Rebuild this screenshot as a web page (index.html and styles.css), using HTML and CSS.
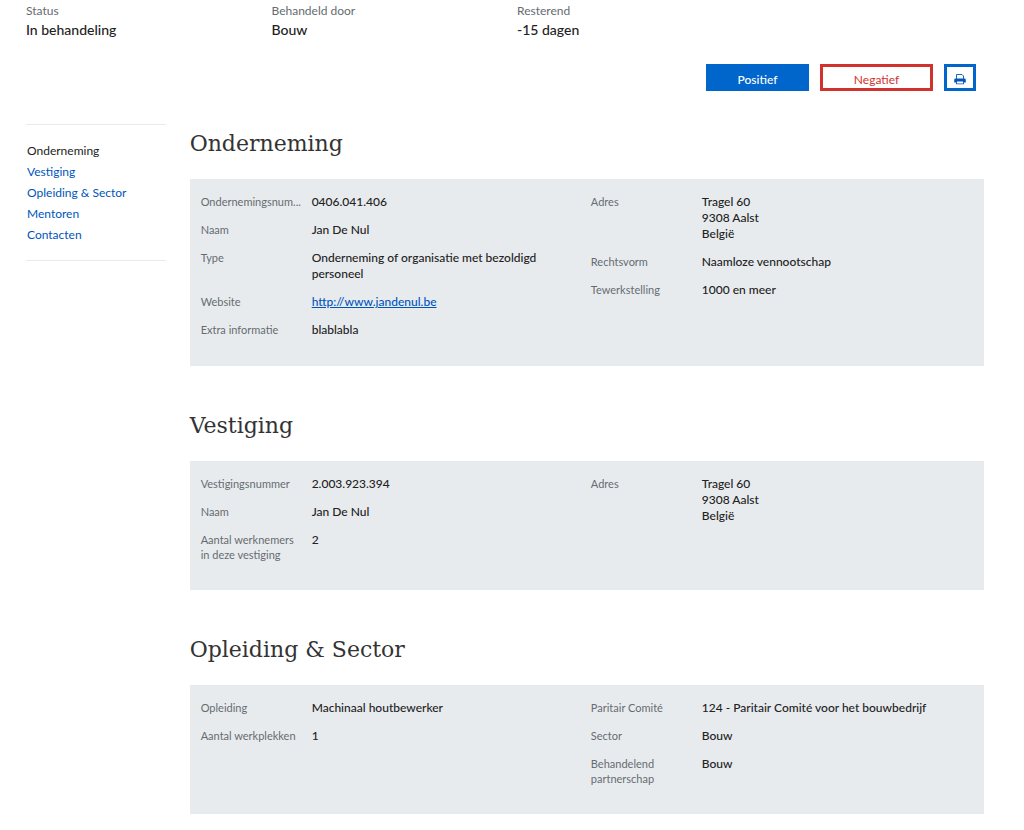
FILE: index.html
```html
<!DOCTYPE html>
<html lang="nl">
<head>
<meta charset="utf-8">
<meta name="viewport" content="width=device-width, initial-scale=1">
<title>Onderneming</title>
<link rel="stylesheet" href="styles.css">
</head>
<body>
<div class="page">
  <dl class="summary">
    <div><dt>Status</dt><dd>In behandeling</dd></div>
    <div><dt>Behandeld door</dt><dd>Bouw</dd></div>
    <div><dt>Resterend</dt><dd>-15 dagen</dd></div>
  </dl>

  <div class="actions">
    <button class="button button-positive" type="button">Positief</button>
    <button class="button button-negative" type="button">Negatief</button>
    <button class="button button-print" type="button" aria-label="Afdrukken">
      <svg class="print-icon" viewBox="0 0 12 12" aria-hidden="true">
        <path d="M2.500 6V1.500h5.500l1.500 1.500V6" fill="none" stroke="currentColor" stroke-width="0.900"/>
        <path fill="currentColor" fill-rule="evenodd" d="M1.600 5.500h8.800Q11.800 5.500 11.800 6.900V9.500H10V11.300H2V9.500H.2V6.900Q.2 5.500 1.600 5.500zM2.900 8.500v2h6.200v-2z"/>
      </svg>
    </button>
  </div>

  <div class="layout">
    <nav class="side-nav" aria-label="Secties">
      <a class="current" href="#onderneming" aria-current="true">Onderneming</a>
      <a href="#vestiging">Vestiging</a>
      <a href="#opleiding">Opleiding &amp; Sector</a>
      <a href="#mentoren">Mentoren</a>
      <a href="#contacten">Contacten</a>
    </nav>

    <main class="content">
      <section class="section" id="onderneming">
        <h2>Onderneming</h2>
        <div class="panel">
          <dl class="fields">
            <div class="field"><dt title="Ondernemingsnummer">Ondernemingsnum...</dt><dd>0406.041.406</dd></div>
            <div class="field"><dt>Naam</dt><dd>Jan De Nul</dd></div>
            <div class="field"><dt>Type</dt><dd>Onderneming of organisatie met bezoldigd personeel</dd></div>
            <div class="field"><dt>Website</dt><dd><a href="http://www.jandenul.be">http://www.jandenul.be</a></dd></div>
            <div class="field"><dt>Extra informatie</dt><dd>blablabla</dd></div>
          </dl>
          <dl class="fields">
            <div class="field"><dt>Adres</dt><dd>Tragel 60<br>9308 Aalst<br>België</dd></div>
            <div class="field"><dt>Rechtsvorm</dt><dd>Naamloze vennootschap</dd></div>
            <div class="field"><dt>Tewerkstelling</dt><dd>1000 en meer</dd></div>
          </dl>
        </div>
      </section>

      <section class="section" id="vestiging">
        <h2>Vestiging</h2>
        <div class="panel">
          <dl class="fields">
            <div class="field"><dt>Vestigingsnummer</dt><dd>2.003.923.394</dd></div>
            <div class="field"><dt>Naam</dt><dd>Jan De Nul</dd></div>
            <div class="field"><dt>Aantal werknemers in deze vestiging</dt><dd>2</dd></div>
          </dl>
          <dl class="fields">
            <div class="field"><dt>Adres</dt><dd>Tragel 60<br>9308 Aalst<br>België</dd></div>
          </dl>
        </div>
      </section>

      <section class="section" id="opleiding">
        <h2>Opleiding &amp; Sector</h2>
        <div class="panel">
          <dl class="fields">
            <div class="field"><dt>Opleiding</dt><dd>Machinaal houtbewerker</dd></div>
            <div class="field"><dt>Aantal werkplekken</dt><dd>1</dd></div>
          </dl>
          <dl class="fields">
            <div class="field"><dt>Paritair Comité</dt><dd>124 - Paritair Comité voor het bouwbedrijf</dd></div>
            <div class="field"><dt>Sector</dt><dd>Bouw</dd></div>
            <div class="field"><dt>Behandelend partnerschap</dt><dd>Bouw</dd></div>
          </dl>
        </div>
      </section>
    </main>
  </div>
</div>
</body>
</html>
```
FILE: styles.css
```css
* { box-sizing: border-box; }

body {
  margin: 0;
  background: #fff;
  color: #222;
  font-family: Lato, "Open Sans", sans-serif;
  font-size: 12px;
}

dl, dd, h2 { margin: 0; }

dt { color: #666b70; }

a { color: #0055bb; }

.page { padding: 3px 40px 16px 26px; }

.summary {
  display: grid;
  grid-template-columns: repeat(4, 1fr);
  gap: 24px;
}

.summary dt { line-height: 16px; }

.summary dd {
  font-size: 14px;
  font-weight: 500;
  line-height: 22px;
}

.actions {
  display: flex;
  justify-content: flex-end;
  gap: 11px;
  padding: 23px 8px 0 0;
}

.button {
  display: flex;
  align-items: center;
  justify-content: center;
  height: 27px;
  padding: 3px 0 0;
  border: 3px solid #0066cc;
  background: #fff;
  color: #0055bb;
  font: inherit;
}

.button-positive {
  width: 103px;
  background: #0066cc;
  color: #fff;
  font-weight: 500;
}

.button-negative {
  width: 113px;
  border-color: #d2322d;
  color: #d2322d;
}

.button-print { width: 32px; }

.print-icon {
  width: 12px;
  height: 12px;
}

.layout {
  display: grid;
  grid-template-columns: repeat(12, 1fr);
  column-gap: 24px;
  align-items: start;
  padding-top: 33px;
}

.side-nav {
  grid-column: span 2;
  display: flex;
  flex-direction: column;
  padding: 15px 1px;
  border: solid #e8ebee;
  border-width: 1px 0;
}

.side-nav a {
  line-height: 21px;
  text-decoration: none;
  white-space: nowrap;
}

.side-nav .current { color: #222; }

.content {
  grid-column: span 10;
  display: flex;
  flex-direction: column;
  gap: 40px;
}

.section h2 {
  margin-bottom: 15px;
  color: #333;
  font-family: "DejaVu Serif", serif;
  font-size: 22px;
  font-weight: 400;
  line-height: 40px;
}

.panel {
  display: grid;
  grid-template-columns: 1fr 1fr;
  gap: 8px;
  padding: 15px 11px 16px;
  background: #e8ebee;
}

.field {
  display: grid;
  grid-template-columns: 103px 1fr;
  gap: 8px;
  padding-bottom: 12px;
}

.field dt {
  font-size: 11px;
  line-height: 15px;
}

.field dd {
  font-weight: 500;
  line-height: 16px;
}
```
